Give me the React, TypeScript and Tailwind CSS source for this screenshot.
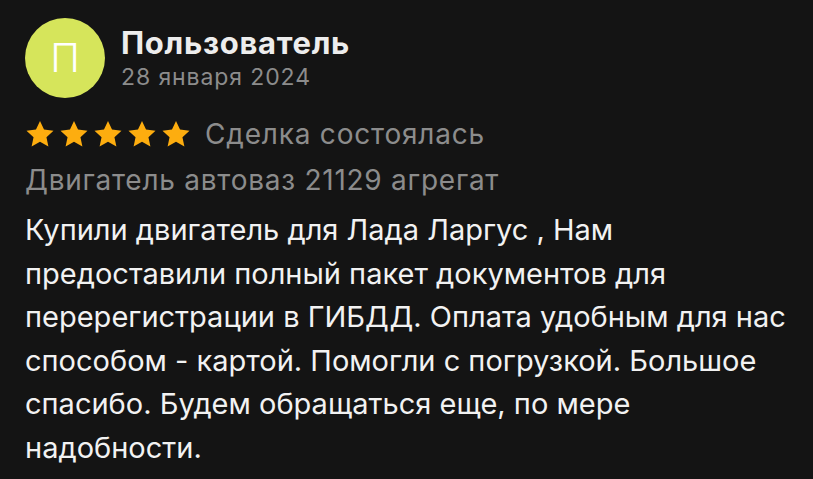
const stars = [0, 1, 2, 3, 4];

function Star() {
  return (
    <svg width="30" height="28" viewBox="0 0 24 23" className="shrink-0">
      <path
        d="M12 0.8l3.3 7.1 7.8 0.9-5.8 5.3 1.6 7.7L12 17.9l-6.9 3.9 1.6-7.7L0.9 8.8l7.8-0.9z"
        fill="#fdad0f"
      />
    </svg>
  );
}

export default function App() {
  return (
    <div className="min-h-screen w-full bg-[#141414] pl-[25px] pt-[18px] font-['Inter',sans-serif]">
      <div className="flex items-center gap-[16px]">
        <div className="flex h-[80px] w-[80px] shrink-0 items-center justify-center rounded-full bg-[#d6e55b]">
          <span className="text-[40px] font-light leading-none text-white">П</span>
        </div>
        <div className="flex flex-col">
          <span className="text-[31px] font-bold leading-[38px] tracking-[0.7px] text-[#ededed]">Пользователь</span>
          <span className="text-[23px] leading-[30px] tracking-[0.9px] text-[#8c8c8c]">28 января 2024</span>
        </div>
      </div>

      <div className="mt-[18px] flex items-center gap-[14px]">
        <div className="flex items-center gap-[4px]">
          {stars.map((i) => (
            <Star key={i} />
          ))}
        </div>
        <span className="text-[28px] leading-[36px] tracking-[0.8px] text-[#8c8c8c]">Сделка состоялась</span>
      </div>
      <div className="mt-[10px] text-[28px] leading-[36px] tracking-[0.75px] text-[#8c8c8c]">Двигатель автоваз 21129 агрегат</div>

      <p className="mt-[10px] max-w-[782px] text-[29px] leading-[43.5px] text-[#f2f2f2]">
        Купили двигатель для Лада Ларгус , Нам предоставили полный пакет документов для
        перерегистрации в ГИБДД. Оплата удобным для нас способом - картой. Помогли с погрузкой.
        Большое спасибо. Будем обращаться еще, по мере надобности.
      </p>
    </div>
  );
}
